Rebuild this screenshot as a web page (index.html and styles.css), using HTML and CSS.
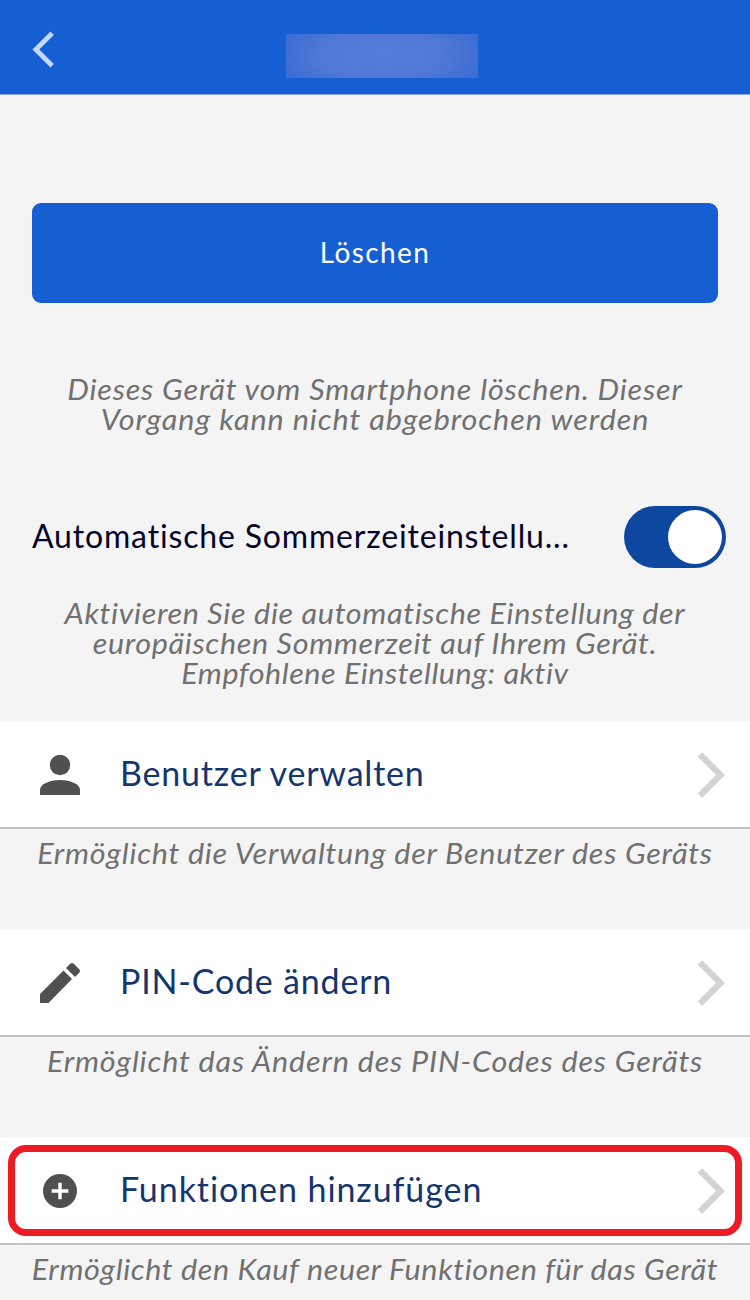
FILE: index.html
```html
<!DOCTYPE html>
<html lang="de">
<head>
<meta charset="utf-8">
<title>Geräteeinstellungen</title>
<link rel="stylesheet" href="styles.css">
</head>
<body>
<header class="topbar">
  <svg class="back" viewBox="0 0 24 38" width="24" height="38"><path d="M21.200 3.200 4.800 19.500 21.200 35.800" fill="none" stroke="#c3d8fa" stroke-width="4.800"/></svg>
  <div class="title-mask"></div>
</header>
<main>
  <button class="delete">Löschen</button>
  <p class="hint hint-delete"><span class="l1">Dieses Gerät vom Smartphone löschen. Dieser</span><span class="l2">Vorgang kann nicht abgebrochen werden</span></p>
  <div class="switch-row">
    <span class="switch-label">Automatische Sommerzeiteinstellu...</span>
    <span class="switch"><span class="knob"></span></span>
  </div>
  <p class="hint hint-dst"><span class="l3">Aktivieren Sie die automatische Einstellung der</span><span class="l4">europäischen Sommerzeit auf Ihrem Gerät.</span><span class="l5">Empfohlene Einstellung: aktiv</span></p>

  <section class="entry">
    <div class="row">
      <svg class="icon" viewBox="0 0 40 40" width="40" height="40" fill="#505050"><circle cx="20" cy="10" r="10.2"/><path d="M0 40V34.500C0 29.500 9 25 20 25S40 29.500 40 34.500V40Z"/></svg>
      <span class="label">Benutzer verwalten</span>
      <svg class="chevron" viewBox="0 0 28 46" width="28" height="46"><path d="M3 2.500 23.500 23 3 43.500" fill="none" stroke="#d3d3d3" stroke-width="6.400"/></svg>
    </div>
    <p class="hint"><span class="l6">Ermöglicht die Verwaltung der Benutzer des Geräts</span></p>
  </section>

  <section class="entry">
    <div class="row">
      <svg class="icon" viewBox="0 0 40 40" width="40" height="40" fill="#505050"><path d="M0 40V31L23.500 7.500 32 16 8.500 40Z"/><path d="M26 5 30 1Q32 -1 34 1L39 6Q41 8 39 10L35 14Z"/></svg>
      <span class="label">PIN-Code ändern</span>
      <svg class="chevron" viewBox="0 0 28 46" width="28" height="46"><path d="M3 2.500 23.500 23 3 43.500" fill="none" stroke="#d3d3d3" stroke-width="6.400"/></svg>
    </div>
    <p class="hint"><span class="l7">Ermöglicht das Ändern des PIN-Codes des Geräts</span></p>
  </section>

  <section class="entry">
    <div class="row marked">
      <svg class="icon" viewBox="0 0 40 40" width="40" height="40"><circle cx="20" cy="20" r="17" fill="#505050"/><path d="M20 11.700V28.300M11.700 20H28.300" stroke="#fff" stroke-width="3.400"/></svg>
      <span class="label wide">Funktionen hinzufügen</span>
      <svg class="chevron" viewBox="0 0 28 46" width="28" height="46"><path d="M3 2.500 23.500 23 3 43.500" fill="none" stroke="#d3d3d3" stroke-width="6.400"/></svg>
    </div>
    <p class="hint"><span class="l8">Ermöglicht den Kauf neuer Funktionen für das Gerät</span></p>
  </section>
</main>
</body>
</html>
```
FILE: styles.css
```css
*, *::after { box-sizing: border-box; }
body { margin: 0; width: 750px; height: 1300px; overflow: hidden; background: #f4f4f4; font-family: Lato, sans-serif; }
.topbar { height: 95px; background: #155fd3; border-bottom: 1px solid #8aa9e0; display: flex; padding: 30px 0 0 31px; }
.back { flex: none; }
.title-mask { width: 192px; height: 44px; margin: 4px 0 0 231px; background: radial-gradient(ellipse 62% 110% at 50% 48%, #577cd8 0%, #5178d7 50%, #416fd5 80%, #326ad4 100%); }
.delete { display: block; width: 686px; height: 100px; margin: 108px 0 0 32px; padding: 0 0 3px; border: 0; border-radius: 9px; background: #155fd3; color: #fff; font: 28px Lato, sans-serif; letter-spacing: 1.4px; }
.hint { margin: 0; color: #707070; font-size: 28px; line-height: 30px; font-style: italic; text-align: center; white-space: nowrap; }
.hint span { display: block; transform: scaleX(1.09); }
.l1 { letter-spacing: .75px; }
.l2 { letter-spacing: .85px; }
.l3 { letter-spacing: .6px; }
.l4 { letter-spacing: .6px; }
.l5 { letter-spacing: .5px; }
.l6 { letter-spacing: .68px; }
.l7 { letter-spacing: .75px; }
.l8 { letter-spacing: .55px; }
.hint-delete { margin-top: 71px; }
.switch-row { display: flex; align-items: center; justify-content: space-between; height: 62px; margin-top: 72px; padding: 0 24px 0 32px; }
.switch-label { padding-bottom: 4px; color: #05032b; font-size: 32px; letter-spacing: .83px; white-space: nowrap; }
.switch { display: flex; justify-content: flex-end; width: 102px; height: 62px; padding: 4px; border-radius: 31px; background: #0e479f; }
.knob { width: 54px; height: 54px; border-radius: 50%; background: #fff; }
.hint-dst { margin-top: 30px; height: 123px; }
.entry { height: 208px; }
.row { display: flex; align-items: center; height: 108px; padding: 0 25px 0 40px; background: #fff; border-bottom: 2px solid #c3c3c3; position: relative; }
.label { flex: 1; margin-left: 40px; padding-bottom: 4px; color: #14366f; font-size: 34px; letter-spacing: .8px; white-space: nowrap; }
.wide { letter-spacing: .92px; }
.icon, .chevron { flex: none; margin-top: 2px; }
.entry .hint { padding-top: 9px; }
.marked::after { content: ""; position: absolute; left: 8px; top: 8px; width: 734px; height: 91px; border: 7px solid #ed1c24; border-radius: 18px; }
```
